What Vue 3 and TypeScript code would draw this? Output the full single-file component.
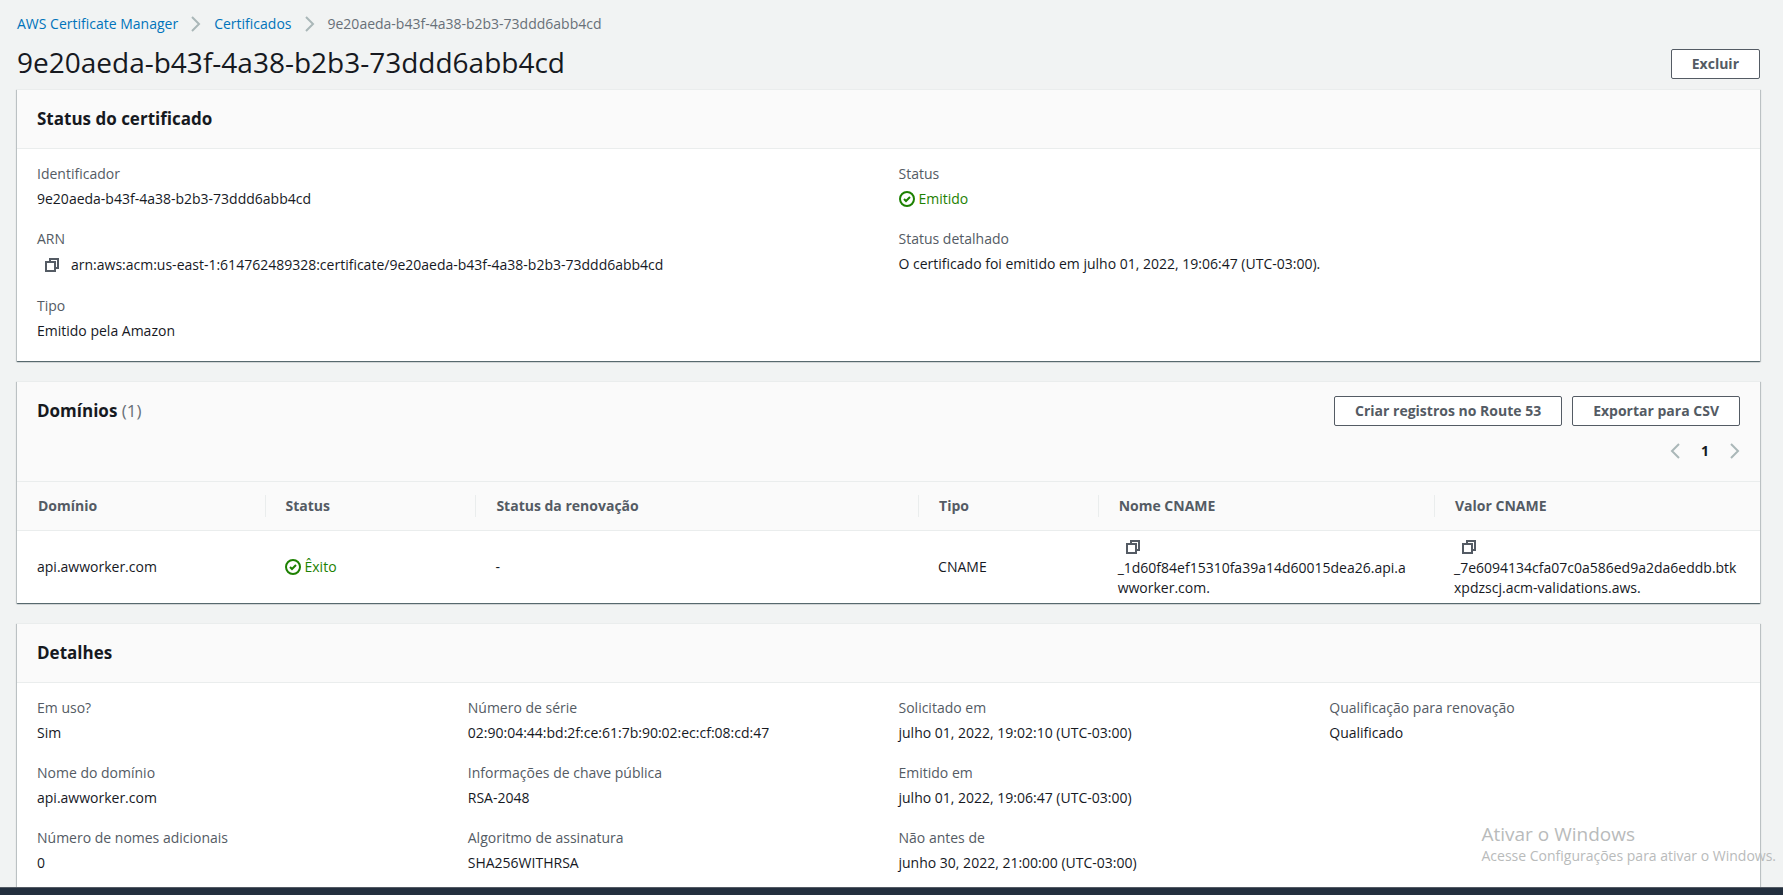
<script setup lang="ts">
interface Field {
  label: string
  value: string
  kind?: 'success' | 'copy'
}

const certificateId = '9e20aeda-b43f-4a38-b2b3-73ddd6abb4cd'

const statusColumns: Field[][] = [
  [
    { label: 'Identificador', value: certificateId },
    { label: 'ARN', value: `arn:aws:acm:us-east-1:614762489328:certificate/${certificateId}`, kind: 'copy' },
    { label: 'Tipo', value: 'Emitido pela Amazon' },
  ],
  [
    { label: 'Status', value: 'Emitido', kind: 'success' },
    { label: 'Status detalhado', value: 'O certificado foi emitido em julho 01, 2022, 19:06:47 (UTC-03:00).' },
  ],
]

const detailColumns: Field[][] = [
  [
    { label: 'Em uso?', value: 'Sim' },
    { label: 'Nome do domínio', value: 'api.awworker.com' },
    { label: 'Número de nomes adicionais', value: '0' },
  ],
  [
    { label: 'Número de série', value: '02:90:04:44:bd:2f:ce:61:7b:90:02:ec:cf:08:cd:47' },
    { label: 'Informações de chave pública', value: 'RSA-2048' },
    { label: 'Algoritmo de assinatura', value: 'SHA256WITHRSA' },
  ],
  [
    { label: 'Solicitado em', value: 'julho 01, 2022, 19:02:10 (UTC-03:00)' },
    { label: 'Emitido em', value: 'julho 01, 2022, 19:06:47 (UTC-03:00)' },
    { label: 'Não antes de', value: 'junho 30, 2022, 21:00:00 (UTC-03:00)' },
  ],
  [{ label: 'Qualificação para renovação', value: 'Qualificado' }],
]

const tableHeaders = ['Domínio', 'Status', 'Status da renovação', 'Tipo', 'Nome CNAME', 'Valor CNAME']

const domains = [
  {
    domain: 'api.awworker.com',
    status: 'Êxito',
    renewal: '-',
    type: 'CNAME',
    name: '_1d60f84ef15310fa39a14d60015dea26.api.awworker.com.',
    value: '_7e6094134cfa07c0a586ed9a2da6eddb.btkxpdzscj.acm-validations.aws.',
  },
]
</script>

<template>
  <div class="page">
    <main class="content">
      <nav class="breadcrumbs" aria-label="Navegação estrutural">
        <a href="#">AWS Certificate Manager</a>
        <svg class="chevron" viewBox="0 0 16 16" aria-hidden="true"><path d="M4 1l7 7-7 7" /></svg>
        <a href="#">Certificados</a>
        <svg class="chevron" viewBox="0 0 16 16" aria-hidden="true"><path d="M4 1l7 7-7 7" /></svg>
        <span>{{ certificateId }}</span>
      </nav>

      <header class="title-row">
        <h1>{{ certificateId }}</h1>
        <button type="button" class="button">Excluir</button>
      </header>

      <section class="panel">
        <header class="panel-header"><h2>Status do certificado</h2></header>
        <div class="fields two">
          <dl v-for="(column, i) in statusColumns" :key="i">
            <div v-for="field in column" :key="field.label" class="field">
              <dt>{{ field.label }}</dt>
              <dd v-if="field.kind === 'success'" class="success">
                <svg class="icon" viewBox="0 0 16 16" aria-hidden="true"><circle cx="8" cy="8" r="7" /><path d="M5 8l2 2 4-4" /></svg>{{ field.value }}
              </dd>
              <dd v-else-if="field.kind === 'copy'" class="copyable">
                <button type="button" class="copy" aria-label="Copiar">
                  <svg class="icon" viewBox="0 0 16 16" aria-hidden="true"><path d="M2 5h9v9H2z" /><path d="M6 5V2h8v9h-3" /></svg>
                </button>{{ field.value }}
              </dd>
              <dd v-else>{{ field.value }}</dd>
            </div>
          </dl>
        </div>
      </section>

      <section class="panel">
        <header class="panel-header with-tools">
          <div class="tools">
            <h2>Domínios <span class="count">(1)</span></h2>
            <div class="actions">
              <button type="button" class="button">Criar registros no Route 53</button>
              <button type="button" class="button">Exportar para CSV</button>
            </div>
          </div>
          <nav class="pagination" aria-label="Paginação">
            <button type="button" aria-label="Página anterior">
              <svg class="chevron" viewBox="0 0 16 16" aria-hidden="true"><path d="M9 1L2 8l7 7" /></svg>
            </button>
            <button type="button" class="current">1</button>
            <button type="button" aria-label="Próxima página">
              <svg class="chevron" viewBox="0 0 16 16" aria-hidden="true"><path d="M7 1l7 7-7 7" /></svg>
            </button>
          </nav>
        </header>
        <table>
          <thead>
            <tr>
              <th v-for="header in tableHeaders" :key="header" scope="col"><span>{{ header }}</span></th>
            </tr>
          </thead>
          <tbody>
            <tr v-for="row in domains" :key="row.domain">
              <td>{{ row.domain }}</td>
              <td>
                <span class="success">
                  <svg class="icon" viewBox="0 0 16 16" aria-hidden="true"><circle cx="8" cy="8" r="7" /><path d="M5 8l2 2 4-4" /></svg>{{ row.status }}
                </span>
              </td>
              <td>{{ row.renewal }}</td>
              <td>{{ row.type }}</td>
              <td v-for="record in [row.name, row.value]" :key="record" class="record">
                <button type="button" class="copy" aria-label="Copiar">
                  <svg class="icon" viewBox="0 0 16 16" aria-hidden="true"><path d="M2 5h9v9H2z" /><path d="M6 5V2h8v9h-3" /></svg>
                </button>
                <div>{{ record }}</div>
              </td>
            </tr>
          </tbody>
        </table>
      </section>

      <section class="panel">
        <header class="panel-header"><h2>Detalhes</h2></header>
        <div class="fields four">
          <dl v-for="(column, i) in detailColumns" :key="i">
            <div v-for="field in column" :key="field.label" class="field">
              <dt>{{ field.label }}</dt>
              <dd>{{ field.value }}</dd>
            </div>
          </dl>
        </div>
      </section>
    </main>
    <footer class="footer"></footer>
    <aside class="activation">
      <p class="activation-title">Ativar o Windows</p>
      <p>Acesse Configurações para ativar o Windows.</p>
    </aside>
  </div>
</template>

<style>
body {
  margin: 0;
  background: #f1f3f3;
}
</style>

<style scoped>
.page {
  position: relative;
  display: flex;
  flex-direction: column;
  height: 100vh;
  overflow: hidden;
  background: #f1f3f3;
  color: #16191f;
  font: 14px/22px "Open Sans", "Noto Sans", sans-serif;
}

.content {
  flex: 1;
  min-height: 0;
  overflow: hidden;
  padding: 13px 23px 0 17px;
}

.breadcrumbs {
  display: flex;
  align-items: center;
  color: #687078;
}

.breadcrumbs a {
  color: #0073bb;
  text-decoration: none;
}

.breadcrumbs .chevron {
  margin: 0 10px;
}

.chevron {
  display: block;
  width: 16px;
  height: 16px;
  fill: none;
  stroke: #aab7b8;
  stroke-width: 2;
}

.title-row {
  display: flex;
  align-items: flex-end;
  justify-content: space-between;
  margin-bottom: 10px;
  padding-top: 10px;
}

h1 {
  margin: 0;
  font-size: 28px;
  font-weight: 400;
  line-height: 34px;
}

h2 {
  margin: 0;
  font-size: 17px;
  font-weight: 700;
  line-height: 22px;
}

.button {
  box-sizing: border-box;
  height: 30px;
  padding: 0 20px;
  border: 1px solid #545b64;
  border-radius: 2px;
  background: #fff;
  color: #545b64;
  font: 700 14px/22px "Open Sans", "Noto Sans", sans-serif;
}

.panel {
  margin-bottom: 20px;
  border-top: 1px solid #eaeded;
  background: #fff;
  box-shadow: 0 1px 1px 0 rgba(0, 28, 36, 0.5), 1px 1px 1px 0 rgba(0, 28, 36, 0.15), -1px 1px 1px 0 rgba(0, 28, 36, 0.15);
}

.panel-header {
  padding: 18px 20px;
  border-bottom: 1px solid #eaeded;
  background: #fafafa;
}

.with-tools {
  padding: 14px 20px 19px;
}

.tools {
  display: flex;
  align-items: center;
  justify-content: space-between;
}

.actions {
  display: flex;
  gap: 10px;
}

.count {
  color: #687078;
  font-weight: 400;
}

.pagination {
  display: flex;
  justify-content: flex-end;
  gap: 15px;
  margin-top: 14px;
}

.pagination button {
  display: flex;
  align-items: center;
  height: 22px;
  padding: 0;
  border: 0;
  background: none;
}

.pagination .current {
  color: #16191f;
  font: 700 14px/22px "Open Sans", "Noto Sans", sans-serif;
}

.fields {
  display: grid;
  gap: 20px;
  padding: 14px 20px 19px;
}

.two {
  grid-template-columns: repeat(2, 1fr);
}

.four {
  grid-template-columns: repeat(4, 1fr);
}

dl,
dd {
  margin: 0;
}

.field + .field {
  margin-top: 18px;
}

dt {
  margin-bottom: 3px;
  color: #545b64;
}

.success,
.copyable {
  display: flex;
  align-items: center;
}

.success {
  gap: 4px;
  color: #1d8102;
}

.copyable {
  min-height: 24px;
  gap: 11px;
}

.icon {
  display: block;
  width: 16px;
  height: 16px;
  fill: none;
  stroke: currentColor;
  stroke-width: 2;
}

.copy {
  display: block;
  flex: none;
  margin-left: 7px;
  padding: 0;
  border: 0;
  background: none;
  color: #545b64;
}

table {
  width: 100%;
  border-collapse: collapse;
  table-layout: fixed;
}

th {
  padding: 13px 0;
  border-bottom: 1px solid #eaeded;
  background: #fafafa;
  color: #545b64;
  font-weight: 700;
  text-align: left;
}

th span {
  display: block;
  padding-left: 20px;
  border-left: 1px solid transparent;
}

th + th span {
  border-left-color: #eaeded;
}

th:nth-child(1) { width: 14.2%; }
th:nth-child(2) { width: 12.1%; }
th:nth-child(3) { width: 25.4%; }
th:nth-child(4) { width: 10.3%; }
th:nth-child(5) { width: 19.3%; }

td {
  padding: 5px 20px;
  vertical-align: middle;
}

.record {
  line-height: 20px;
  word-break: break-all;
}

.record .copy {
  padding: 3px 0;
}

.footer {
  flex: none;
  height: 7px;
  border-top: 1px solid #545b64;
  background: #232f3e;
}

.activation {
  position: absolute;
  right: 7px;
  bottom: 28px;
  color: #b9bbbb;
  font: 14px/22px "Open Sans", "Noto Sans", sans-serif;
}

.activation p {
  margin: 0;
}

.activation .activation-title {
  font-size: 19px;
}
</style>
